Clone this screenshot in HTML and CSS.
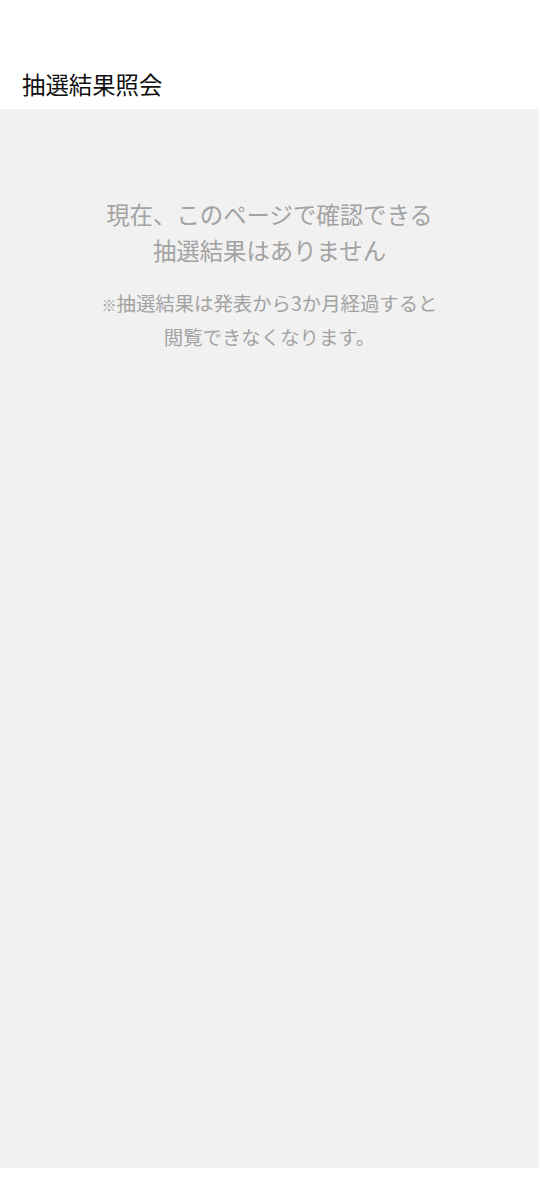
FILE: index.html
```html
<!DOCTYPE html>
<html lang="ja">
<head>
<meta charset="utf-8">
<link rel="stylesheet" href="styles.css">
</head>
<body>
<header class="header">
  <h1 class="title">抽選結果照会</h1>
</header>
<main class="content">
  <p class="message">現在、このページで確認できる<br>抽選結果はありません</p>
  <p class="note"><span class="mark">※</span>抽選結果は発表から3か月経過すると<br>閲覧できなくなります。</p>
</main>
</body>
</html>
```
FILE: styles.css
```css
html, body {
  margin: 0;
  padding: 0;
  background: #ffffff;
  font-family: "Noto Sans CJK JP", "Noto Sans", sans-serif;
}
.header {
  height: 109px;
  display: flex;
  align-items: flex-end;
  box-sizing: border-box;
  padding: 0 0 9px 22px;
}
.title {
  margin: 0;
  font-size: 23.4px;
  font-weight: 400;
  line-height: 32px;
  color: #111111;
}
.content {
  width: 539px;
  height: 1059px;
  background: #f1f1f1;
  box-sizing: border-box;
  padding-top: 87px;
  display: flex;
  flex-direction: column;
  align-items: center;
}
.message {
  margin: 0;
  text-align: center;
  font-size: 23.4px;
  line-height: 36px;
  color: #a3a3a3;
}
.note {
  margin: 19px 0 0;
  text-align: center;
  font-size: 19.4px;
  line-height: 32px;
  color: #a3a3a3;
}
.mark {
  font-size: 15px;
}
```
